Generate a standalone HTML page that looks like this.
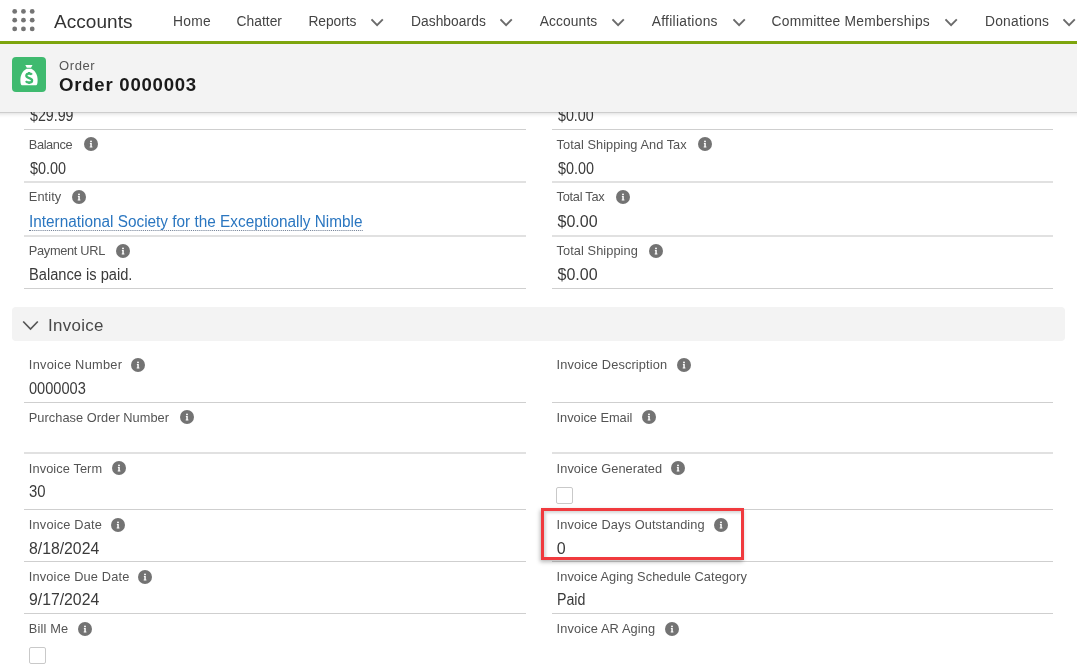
<!DOCTYPE html>
<html><head><meta charset="utf-8"><style>
html,body{margin:0;padding:0;}
body{width:1077px;height:669px;overflow:hidden;position:relative;background:#fff;font-family:"Liberation Sans",sans-serif;}
.t{position:absolute;white-space:nowrap;}
#root{position:absolute;left:0;top:0;width:1077px;height:669px;overflow:hidden;filter:blur(0.5px);}
</style></head><body><div id="root">
<svg style="position:absolute;left:0;top:0" width="50" height="40"><circle cx="14.70" cy="11.40" r="2.4" fill="#747474"/><circle cx="23.45" cy="11.40" r="2.4" fill="#747474"/><circle cx="32.20" cy="11.40" r="2.4" fill="#747474"/><circle cx="14.70" cy="20.15" r="2.4" fill="#747474"/><circle cx="23.45" cy="20.15" r="2.4" fill="#747474"/><circle cx="32.20" cy="20.15" r="2.4" fill="#747474"/><circle cx="14.70" cy="28.90" r="2.4" fill="#747474"/><circle cx="23.45" cy="28.90" r="2.4" fill="#747474"/><circle cx="32.20" cy="28.90" r="2.4" fill="#747474"/></svg>
<div class="t k_app" style="left:54.00px;top:9.92px;font-size:19px;line-height:24px;color:#333333;letter-spacing:0.057px;">Accounts</div>
<div class="t k_nav0" style="left:173.00px;top:13.12px;font-size:13.8px;line-height:17px;color:#444444;letter-spacing:0.267px;">Home</div>
<div class="t k_nav1" style="left:236.50px;top:13.12px;font-size:13.8px;line-height:17px;color:#444444;letter-spacing:0.033px;">Chatter</div>
<div class="t k_nav2" style="left:308.40px;top:13.12px;font-size:13.8px;line-height:17px;color:#444444;letter-spacing:-0.033px;">Reports</div>
<svg style="position:absolute;left:371.0px;top:18px" width="13" height="9" viewBox="0 0 13 9"><path d="M0.5 1.3 L6.1 7.1 L11.8 1.3" fill="none" stroke="#6b6b6b" stroke-width="1.9"/></svg>
<div class="t k_nav3" style="left:410.90px;top:13.12px;font-size:13.8px;line-height:17px;color:#444444;letter-spacing:0.067px;">Dashboards</div>
<svg style="position:absolute;left:500.3px;top:18px" width="13" height="9" viewBox="0 0 13 9"><path d="M0.5 1.3 L6.1 7.1 L11.8 1.3" fill="none" stroke="#6b6b6b" stroke-width="1.9"/></svg>
<div class="t k_nav4" style="left:539.70px;top:13.12px;font-size:13.8px;line-height:17px;color:#444444;letter-spacing:0.114px;">Accounts</div>
<svg style="position:absolute;left:612.4px;top:18px" width="13" height="9" viewBox="0 0 13 9"><path d="M0.5 1.3 L6.1 7.1 L11.8 1.3" fill="none" stroke="#6b6b6b" stroke-width="1.9"/></svg>
<div class="t k_nav5" style="left:651.70px;top:13.12px;font-size:13.8px;line-height:17px;color:#444444;letter-spacing:0.291px;">Affiliations</div>
<svg style="position:absolute;left:733.4px;top:18px" width="13" height="9" viewBox="0 0 13 9"><path d="M0.5 1.3 L6.1 7.1 L11.8 1.3" fill="none" stroke="#6b6b6b" stroke-width="1.9"/></svg>
<div class="t k_nav6" style="left:771.60px;top:13.12px;font-size:13.8px;line-height:17px;color:#444444;letter-spacing:0.240px;">Committee Memberships</div>
<svg style="position:absolute;left:945.0px;top:18px" width="13" height="9" viewBox="0 0 13 9"><path d="M0.5 1.3 L6.1 7.1 L11.8 1.3" fill="none" stroke="#6b6b6b" stroke-width="1.9"/></svg>
<div class="t k_nav7" style="left:985.00px;top:13.12px;font-size:13.8px;line-height:17px;color:#444444;letter-spacing:0.225px;">Donations</div>
<svg style="position:absolute;left:1063.0px;top:18px" width="13" height="9" viewBox="0 0 13 9"><path d="M0.5 1.3 L6.1 7.1 L11.8 1.3" fill="none" stroke="#6b6b6b" stroke-width="1.9"/></svg>
<div style="position:absolute;left:0;top:41px;width:1077px;height:3px;background:#7ea60d"></div>
<div class="t k_v29" style="left:30.00px;top:106.06px;font-size:16px;line-height:20px;color:#3a3a3a;transform:scaleX(0.8896);transform-origin:0 0;">$29.99</div>
<div class="t k_vtop0" style="left:557.50px;top:106.06px;font-size:16px;line-height:20px;color:#3a3a3a;transform:scaleX(0.8901);transform-origin:0 0;">$0.00</div>
<div style="position:absolute;left:24px;top:129px;width:502px;height:1px;background:#cfcfcf"></div>
<div style="position:absolute;left:552px;top:129px;width:501px;height:1px;background:#cfcfcf"></div>
<div style="position:absolute;left:24px;top:181px;width:502px;height:2px;background:#e1e1e1"></div>
<div style="position:absolute;left:552px;top:181px;width:501px;height:2px;background:#e1e1e1"></div>
<div style="position:absolute;left:24px;top:235px;width:502px;height:2px;background:#e1e1e1"></div>
<div style="position:absolute;left:552px;top:235px;width:501px;height:2px;background:#e1e1e1"></div>
<div style="position:absolute;left:24px;top:288px;width:502px;height:1px;background:#cfcfcf"></div>
<div style="position:absolute;left:552px;top:288px;width:501px;height:1px;background:#cfcfcf"></div>
<div class="t k_lBal" style="left:28.80px;top:136.76px;font-size:12.8px;line-height:16px;color:#545454;letter-spacing:-0.400px;">Balance</div>
<svg style="position:absolute;left:83.80px;top:137.40px" width="14" height="14" viewBox="0 0 14 14"><circle cx="7" cy="7" r="7" fill="#737373"/><circle cx="7" cy="4.4" r="0.95" fill="#fff"/><path d="M5.9 6.1 H7.8 V9.4 H8.4 V10.4 H5.7 V9.4 H6.3 V7.1 H5.9 Z" fill="#fff"/></svg>
<div class="t k_lEnt" style="left:28.80px;top:189.26px;font-size:12.8px;line-height:16px;color:#545454;letter-spacing:0.080px;">Entity</div>
<svg style="position:absolute;left:71.50px;top:189.90px" width="14" height="14" viewBox="0 0 14 14"><circle cx="7" cy="7" r="7" fill="#737373"/><circle cx="7" cy="4.4" r="0.95" fill="#fff"/><path d="M5.9 6.1 H7.8 V9.4 H8.4 V10.4 H5.7 V9.4 H6.3 V7.1 H5.9 Z" fill="#fff"/></svg>
<div class="t k_lPay" style="left:28.80px;top:243.16px;font-size:12.8px;line-height:16px;color:#545454;letter-spacing:-0.320px;">Payment URL</div>
<svg style="position:absolute;left:116.30px;top:243.80px" width="14" height="14" viewBox="0 0 14 14"><circle cx="7" cy="7" r="7" fill="#737373"/><circle cx="7" cy="4.4" r="0.95" fill="#fff"/><path d="M5.9 6.1 H7.8 V9.4 H8.4 V10.4 H5.7 V9.4 H6.3 V7.1 H5.9 Z" fill="#fff"/></svg>
<div class="t k_rTSAT" style="left:556.60px;top:136.76px;font-size:12.8px;line-height:16px;color:#545454;letter-spacing:0.038px;">Total Shipping And Tax</div>
<svg style="position:absolute;left:697.70px;top:137.40px" width="14" height="14" viewBox="0 0 14 14"><circle cx="7" cy="7" r="7" fill="#737373"/><circle cx="7" cy="4.4" r="0.95" fill="#fff"/><path d="M5.9 6.1 H7.8 V9.4 H8.4 V10.4 H5.7 V9.4 H6.3 V7.1 H5.9 Z" fill="#fff"/></svg>
<div class="t k_rTT" style="left:556.60px;top:189.26px;font-size:12.8px;line-height:16px;color:#545454;letter-spacing:-0.275px;">Total Tax</div>
<svg style="position:absolute;left:615.60px;top:189.90px" width="14" height="14" viewBox="0 0 14 14"><circle cx="7" cy="7" r="7" fill="#737373"/><circle cx="7" cy="4.4" r="0.95" fill="#fff"/><path d="M5.9 6.1 H7.8 V9.4 H8.4 V10.4 H5.7 V9.4 H6.3 V7.1 H5.9 Z" fill="#fff"/></svg>
<div class="t k_rTS" style="left:556.60px;top:243.16px;font-size:12.8px;line-height:16px;color:#545454;letter-spacing:0.062px;">Total Shipping</div>
<svg style="position:absolute;left:648.60px;top:243.80px" width="14" height="14" viewBox="0 0 14 14"><circle cx="7" cy="7" r="7" fill="#737373"/><circle cx="7" cy="4.4" r="0.95" fill="#fff"/><path d="M5.9 6.1 H7.8 V9.4 H8.4 V10.4 H5.7 V9.4 H6.3 V7.1 H5.9 Z" fill="#fff"/></svg>
<div class="t k_lIN" style="left:28.80px;top:357.36px;font-size:12.8px;line-height:16px;color:#545454;letter-spacing:0.277px;">Invoice Number</div>
<svg style="position:absolute;left:131.00px;top:358.00px" width="14" height="14" viewBox="0 0 14 14"><circle cx="7" cy="7" r="7" fill="#737373"/><circle cx="7" cy="4.4" r="0.95" fill="#fff"/><path d="M5.9 6.1 H7.8 V9.4 H8.4 V10.4 H5.7 V9.4 H6.3 V7.1 H5.9 Z" fill="#fff"/></svg>
<div class="t k_lPON" style="left:28.80px;top:409.56px;font-size:12.8px;line-height:16px;color:#545454;letter-spacing:0.040px;">Purchase Order Number</div>
<svg style="position:absolute;left:179.60px;top:410.20px" width="14" height="14" viewBox="0 0 14 14"><circle cx="7" cy="7" r="7" fill="#737373"/><circle cx="7" cy="4.4" r="0.95" fill="#fff"/><path d="M5.9 6.1 H7.8 V9.4 H8.4 V10.4 H5.7 V9.4 H6.3 V7.1 H5.9 Z" fill="#fff"/></svg>
<div class="t k_lIT" style="left:28.80px;top:460.56px;font-size:12.8px;line-height:16px;color:#545454;letter-spacing:0.091px;">Invoice Term</div>
<svg style="position:absolute;left:111.70px;top:461.20px" width="14" height="14" viewBox="0 0 14 14"><circle cx="7" cy="7" r="7" fill="#737373"/><circle cx="7" cy="4.4" r="0.95" fill="#fff"/><path d="M5.9 6.1 H7.8 V9.4 H8.4 V10.4 H5.7 V9.4 H6.3 V7.1 H5.9 Z" fill="#fff"/></svg>
<div class="t k_lID" style="left:28.80px;top:517.06px;font-size:12.8px;line-height:16px;color:#545454;letter-spacing:0.182px;">Invoice Date</div>
<svg style="position:absolute;left:110.70px;top:517.70px" width="14" height="14" viewBox="0 0 14 14"><circle cx="7" cy="7" r="7" fill="#737373"/><circle cx="7" cy="4.4" r="0.95" fill="#fff"/><path d="M5.9 6.1 H7.8 V9.4 H8.4 V10.4 H5.7 V9.4 H6.3 V7.1 H5.9 Z" fill="#fff"/></svg>
<div class="t k_lIDD" style="left:28.80px;top:568.86px;font-size:12.8px;line-height:16px;color:#545454;letter-spacing:0.160px;">Invoice Due Date</div>
<svg style="position:absolute;left:138.00px;top:569.50px" width="14" height="14" viewBox="0 0 14 14"><circle cx="7" cy="7" r="7" fill="#737373"/><circle cx="7" cy="4.4" r="0.95" fill="#fff"/><path d="M5.9 6.1 H7.8 V9.4 H8.4 V10.4 H5.7 V9.4 H6.3 V7.1 H5.9 Z" fill="#fff"/></svg>
<div class="t k_lBM" style="left:28.80px;top:621.06px;font-size:12.8px;line-height:16px;color:#545454;letter-spacing:0.167px;">Bill Me</div>
<svg style="position:absolute;left:78.30px;top:621.70px" width="14" height="14" viewBox="0 0 14 14"><circle cx="7" cy="7" r="7" fill="#737373"/><circle cx="7" cy="4.4" r="0.95" fill="#fff"/><path d="M5.9 6.1 H7.8 V9.4 H8.4 V10.4 H5.7 V9.4 H6.3 V7.1 H5.9 Z" fill="#fff"/></svg>
<div class="t k_rDesc" style="left:556.60px;top:357.36px;font-size:12.8px;line-height:16px;color:#545454;letter-spacing:0.133px;">Invoice Description</div>
<svg style="position:absolute;left:676.70px;top:358.00px" width="14" height="14" viewBox="0 0 14 14"><circle cx="7" cy="7" r="7" fill="#737373"/><circle cx="7" cy="4.4" r="0.95" fill="#fff"/><path d="M5.9 6.1 H7.8 V9.4 H8.4 V10.4 H5.7 V9.4 H6.3 V7.1 H5.9 Z" fill="#fff"/></svg>
<div class="t k_rEm" style="left:556.60px;top:409.56px;font-size:12.8px;line-height:16px;color:#545454;letter-spacing:-0.033px;">Invoice Email</div>
<svg style="position:absolute;left:641.80px;top:410.20px" width="14" height="14" viewBox="0 0 14 14"><circle cx="7" cy="7" r="7" fill="#737373"/><circle cx="7" cy="4.4" r="0.95" fill="#fff"/><path d="M5.9 6.1 H7.8 V9.4 H8.4 V10.4 H5.7 V9.4 H6.3 V7.1 H5.9 Z" fill="#fff"/></svg>
<div class="t k_rGen" style="left:556.60px;top:460.56px;font-size:12.8px;line-height:16px;color:#545454;letter-spacing:0.062px;">Invoice Generated</div>
<svg style="position:absolute;left:671.30px;top:461.20px" width="14" height="14" viewBox="0 0 14 14"><circle cx="7" cy="7" r="7" fill="#737373"/><circle cx="7" cy="4.4" r="0.95" fill="#fff"/><path d="M5.9 6.1 H7.8 V9.4 H8.4 V10.4 H5.7 V9.4 H6.3 V7.1 H5.9 Z" fill="#fff"/></svg>
<div class="t k_rDays" style="left:556.60px;top:517.06px;font-size:12.8px;line-height:16px;color:#545454;letter-spacing:0.096px;">Invoice Days Outstanding</div>
<svg style="position:absolute;left:714.30px;top:517.70px" width="14" height="14" viewBox="0 0 14 14"><circle cx="7" cy="7" r="7" fill="#737373"/><circle cx="7" cy="4.4" r="0.95" fill="#fff"/><path d="M5.9 6.1 H7.8 V9.4 H8.4 V10.4 H5.7 V9.4 H6.3 V7.1 H5.9 Z" fill="#fff"/></svg>
<div class="t k_rAging" style="left:556.60px;top:568.86px;font-size:12.8px;line-height:16px;color:#545454;letter-spacing:0.060px;">Invoice Aging Schedule Category</div>
<div class="t k_rAR" style="left:556.60px;top:621.06px;font-size:12.8px;line-height:16px;color:#545454;letter-spacing:0.120px;">Invoice AR Aging</div>
<svg style="position:absolute;left:665.30px;top:621.70px" width="14" height="14" viewBox="0 0 14 14"><circle cx="7" cy="7" r="7" fill="#737373"/><circle cx="7" cy="4.4" r="0.95" fill="#fff"/><path d="M5.9 6.1 H7.8 V9.4 H8.4 V10.4 H5.7 V9.4 H6.3 V7.1 H5.9 Z" fill="#fff"/></svg>
<div class="t k_vBal" style="left:29.70px;top:158.76px;font-size:16px;line-height:20px;color:#3a3a3a;transform:scaleX(0.9002);transform-origin:0 0;">$0.00</div>
<div class="t k_vTSAT" style="left:557.50px;top:158.76px;font-size:16px;line-height:20px;color:#3a3a3a;transform:scaleX(0.8977);transform-origin:0 0;">$0.00</div>
<div class="t k_vTT" style="left:557.50px;top:212.36px;font-size:16px;line-height:20px;color:#3a3a3a;transform:scaleX(1.0000);transform-origin:0 0;">$0.00</div>
<div class="t k_vTS" style="left:557.50px;top:265.36px;font-size:16px;line-height:20px;color:#3a3a3a;transform:scaleX(1.0000);transform-origin:0 0;">$0.00</div>
<div class="t k_vPaid2" style="left:28.90px;top:265.36px;font-size:16px;line-height:20px;color:#3a3a3a;transform:scaleX(0.9156);transform-origin:0 0;">Balance is paid.</div>
<div class="t k_vIN" style="left:28.90px;top:379.06px;font-size:16px;line-height:20px;color:#3a3a3a;transform:scaleX(0.9116);transform-origin:0 0;">0000003</div>
<div class="t k_vIT" style="left:28.90px;top:481.96px;font-size:16px;line-height:20px;color:#3a3a3a;transform:scaleX(0.9300);transform-origin:0 0;">30</div>
<div class="t k_vID" style="left:28.90px;top:539.06px;font-size:16px;line-height:20px;color:#3a3a3a;transform:scaleX(0.9861);transform-origin:0 0;">8/18/2024</div>
<div class="t k_vIDD" style="left:28.90px;top:590.06px;font-size:16px;line-height:20px;color:#3a3a3a;transform:scaleX(0.9861);transform-origin:0 0;">9/17/2024</div>
<div class="t k_vDays" style="left:556.70px;top:538.66px;font-size:16px;line-height:20px;color:#3a3a3a;transform:scaleX(1.0000);transform-origin:0 0;">0</div>
<div class="t k_vAging" style="left:556.70px;top:589.56px;font-size:16px;line-height:20px;color:#3a3a3a;transform:scaleX(0.8873);transform-origin:0 0;">Paid</div>
<div class="t k_vLink" style="left:29.40px;top:214.46px;font-size:16px;line-height:16px;color:#2a76c0;transform:scaleX(0.9590);transform-origin:0 0;border-bottom:1px dotted #6a7a90;">International Society for the Exceptionally Nimble</div>
<div style="position:absolute;left:12px;top:307px;width:1053px;height:34px;background:#f3f3f3;border-radius:4px"></div>
<svg style="position:absolute;left:22px;top:320px" width="17" height="11" viewBox="0 0 17 11"><path d="M1.2 1.5 L8.5 9 L15.8 1.5" fill="none" stroke="#555" stroke-width="1.7"/></svg>
<div class="t k_sec" style="left:48.00px;top:314.74px;font-size:16.9px;line-height:21px;color:#484848;letter-spacing:0.333px;">Invoice</div>
<div style="position:absolute;left:24px;top:402px;width:502px;height:1px;background:#cfcfcf"></div>
<div style="position:absolute;left:552px;top:402px;width:501px;height:1px;background:#cfcfcf"></div>
<div style="position:absolute;left:24px;top:452px;width:502px;height:2px;background:#e1e1e1"></div>
<div style="position:absolute;left:552px;top:452px;width:501px;height:2px;background:#e1e1e1"></div>
<div style="position:absolute;left:24px;top:509px;width:502px;height:1px;background:#cfcfcf"></div>
<div style="position:absolute;left:552px;top:509px;width:501px;height:1px;background:#cfcfcf"></div>
<div style="position:absolute;left:24px;top:561px;width:502px;height:1px;background:#cfcfcf"></div>
<div style="position:absolute;left:552px;top:561px;width:501px;height:1px;background:#cfcfcf"></div>
<div style="position:absolute;left:24px;top:613px;width:502px;height:1px;background:#cfcfcf"></div>
<div style="position:absolute;left:552px;top:613px;width:501px;height:1px;background:#cfcfcf"></div>
<div style="position:absolute;left:29px;top:647px;width:15px;height:15px;border:1px solid #c9c9c9;border-radius:2px;background:#fff"></div>
<div style="position:absolute;left:556px;top:487px;width:15px;height:15px;border:1px solid #c9c9c9;border-radius:2px;background:#fff"></div>
<div style="position:absolute;left:541px;top:508px;width:197px;height:46px;border:3px solid #f03a3e;box-shadow:-1px 2px 4px rgba(0,0,0,.28), inset 2px 2px 3px rgba(0,0,0,.16)"></div>
<div style="position:absolute;left:-20px;top:44px;width:1120px;height:68px;background:#f3f3f3;box-shadow:0 1px 0 rgba(0,0,0,.10),0 2px 4px rgba(0,0,0,.14)"></div>
<div style="position:absolute;left:12px;top:57px;width:34px;height:35px;background:#3fba6f;border-radius:4px"></div>
<svg style="position:absolute;left:12px;top:57px" width="34" height="35" viewBox="0 0 34 35"><path d="M13.3 8 H20.5 L19 10.8 H14.8 Z" fill="#fff"/><path d="M14.6 11.8 H19.4 C23.6 14 25.6 18.5 25.6 23 C25.6 26.6 25 28.3 24 28.3 H10 C9 28.3 8.4 26.6 8.4 23 C8.4 18.5 10.4 14 14.6 11.8 Z" fill="#fff"/><path d="M19.9 17.6 C19.4 16.9 18.5 16.6 17.1 16.6 C15.5 16.6 14.3 17.4 14.3 18.8 C14.3 21.6 20.1 20.6 20.1 23.4 C20.1 24.7 19 25.5 17.1 25.5 C15.6 25.5 14.5 25 13.9 24.1 M17.1 15 V16.8 M17.1 25.3 V27" fill="none" stroke="#3fba6f" stroke-width="2.3"/></svg>
<div class="t k_hOrd" style="left:59.00px;top:58.00px;font-size:13px;line-height:16px;color:#555555;letter-spacing:0.600px;">Order</div>
<div class="t k_hTitle" style="left:59.00px;top:73.36px;font-size:18.6px;line-height:23px;color:#1a1a1a;font-weight:700;letter-spacing:0.750px;">Order 0000003</div>
</div></body></html>
